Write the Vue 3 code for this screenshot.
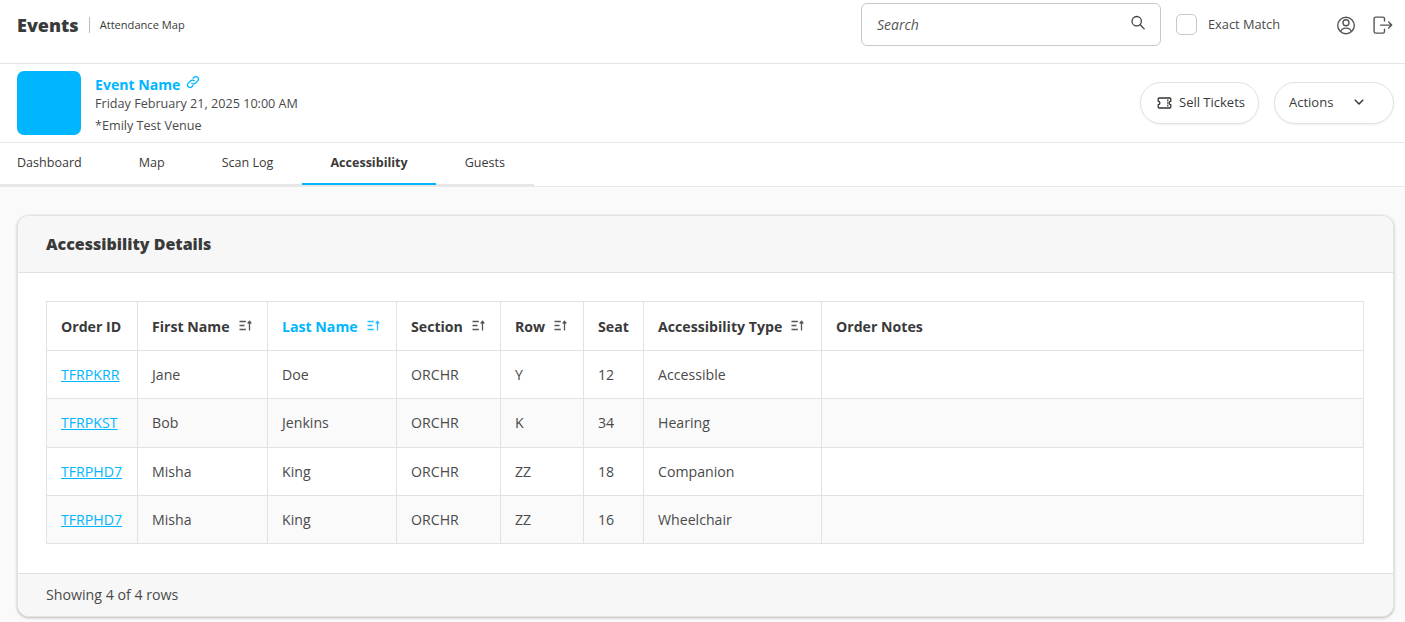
<script setup>
const tabs = [
  { label: 'Dashboard' },
  { label: 'Map' },
  { label: 'Scan Log' },
  { label: 'Accessibility', active: true },
  { label: 'Guests' }
]
const columns = [
  { label: 'Order ID', w: 91 },
  { label: 'First Name', w: 130, sort: true },
  { label: 'Last Name', w: 129, sort: true, active: true },
  { label: 'Section', w: 104, sort: true },
  { label: 'Row', w: 83, sort: true },
  { label: 'Seat', w: 60 },
  { label: 'Accessibility Type', w: 178, sort: true },
  { label: 'Order Notes', w: 542 }
]
const rows = [
  ['TFRPKRR', 'Jane', 'Doe', 'ORCHR', 'Y', '12', 'Accessible', ''],
  ['TFRPKST', 'Bob', 'Jenkins', 'ORCHR', 'K', '34', 'Hearing', ''],
  ['TFRPHD7', 'Misha', 'King', 'ORCHR', 'ZZ', '18', 'Companion', ''],
  ['TFRPHD7', 'Misha', 'King', 'ORCHR', 'ZZ', '16', 'Wheelchair', '']
]
</script>

<template>
  <div class="page">
    <header class="topbar">
      <div class="brand">
        <span class="brand-title">Events</span>
        <span class="brand-sub">Attendance Map</span>
      </div>
      <div class="top-tools">
        <div class="search">
          <span class="search-text">Search</span>
          <svg class="search-icon" width="16" height="16" viewBox="0 0 16 16" fill="none" stroke="#444" stroke-width="1.3">
            <circle cx="6.7" cy="6.2" r="4.7" />
            <path d="M10.2 9.7 14.2 13.9" stroke-linecap="round" />
          </svg>
        </div>
        <span class="check"></span>
        <span class="check-label">Exact Match</span>
        <svg class="user-icon" width="20" height="20" viewBox="0 0 20 20" fill="none" stroke="#555" stroke-width="1.4">
          <circle cx="10" cy="10.500" r="8.300" />
          <circle cx="10" cy="7.800" r="3" />
          <path d="M4.800 16.500c.6-2.400 2.600-3.400 5.200-3.400s4.600 1 5.200 3.400" />
        </svg>
        <svg class="logout-icon" width="20" height="20" viewBox="0 0 20 20" fill="none" stroke="#555" stroke-width="1.4" stroke-linecap="round" stroke-linejoin="round">
          <path d="M11.500 6V3.800a1.700 1.700 0 0 0-1.700-1.700H2.800a1.700 1.700 0 0 0-1.700 1.700v12.600a1.700 1.700 0 0 0 1.700 1.700h7a1.700 1.700 0 0 0 1.700-1.700v-2.200" />
          <path d="M7.500 10.100h11.200M15.700 7.100l3 3-3 3" />
        </svg>
      </div>
    </header>

    <section class="event">
      <div class="thumb"></div>
      <div class="event-info">
        <div class="event-name">
          <span>Event Name</span>
          <svg width="14" height="14" viewBox="0 0 14 14" fill="none" stroke="#00b6ff" stroke-width="1.300" stroke-linecap="round">
            <path d="M5.800 8.200a2.500 2.500 0 0 0 3.600 0l2.300-2.300a2.500 2.500 0 0 0-3.600-3.600l-.9.900" />
            <path d="M8.200 5.800a2.500 2.500 0 0 0-3.600 0L2.300 8.100a2.500 2.500 0 0 0 3.600 3.600l.9-.9" />
          </svg>
        </div>
        <div class="event-date">Friday February 21, 2025 10:00 AM</div>
        <div class="event-venue">*Emily Test Venue</div>
      </div>
      <div class="event-actions">
        <button class="pill sell">
          <svg class="ticket" width="15" height="12" viewBox="0 0 15 12" fill="none" stroke="#333" stroke-width="1.300">
            <path d="M2.200 1h10.600a1 1 0 0 1 1 1v2.300a1.700 1.700 0 0 0 0 3.400V10a1 1 0 0 1-1 1H2.200a1 1 0 0 1-1-1V7.700a1.700 1.700 0 0 0 0-3.400V2a1 1 0 0 1 1-1z" stroke-linejoin="round" />
            <path d="M10.800 2.600v1.600M10.800 5.200v1.600M10.800 7.800v1.600" />
          </svg>
          <span>Sell Tickets</span>
        </button>
        <button class="pill actions">
          <span>Actions</span>
          <svg width="12" height="8" viewBox="0 0 12 8" fill="none" stroke="#333" stroke-width="1.400">
            <path d="M1.800 1.800 6 6l4.200-4.200" />
          </svg>
        </button>
      </div>
    </section>

    <nav class="tabs">
      <a v-for="t in tabs" :key="t.label" class="tab" :class="{ on: t.active }">{{ t.label }}</a>
    </nav>

    <main class="content">
      <section class="card">
        <div class="card-head">Accessibility Details</div>
        <div class="card-body">
          <table class="grid">
            <colgroup>
              <col v-for="c in columns" :key="c.label" :style="{ width: c.w + 'px' }" />
            </colgroup>
            <thead>
              <tr>
                <th v-for="c in columns" :key="c.label" :class="{ hot: c.active }">
                  <span class="th-in">
                    {{ c.label }}
                    <svg v-if="c.sort" class="sort" width="14" height="12" viewBox="0 0 14 12" fill="none" stroke="currentColor" stroke-width="1.300">
                      <path d="M.5 1.500h6.300M.5 5.500h5M.5 9.500h6.300" />
                      <path d="M10.500 10.500V1.500M8.700 3.500l1.800-2.200 1.800 2.200" />
                    </svg>
                  </span>
                </th>
              </tr>
            </thead>
            <tbody>
              <tr v-for="(r, i) in rows" :key="i">
                <td v-for="(v, j) in r" :key="j">
                  <a v-if="j === 0" class="link">{{ v }}</a>
                  <template v-else>{{ v }}</template>
                </td>
              </tr>
            </tbody>
          </table>
        </div>
        <div class="card-foot">Showing 4 of 4 rows</div>
      </section>
    </main>
  </div>
</template>

<style>
html, body { margin: 0; background: #fafafa; }
</style>

<style scoped>
.page {
  width: 1405px;
  height: 622px;
  overflow: hidden;
  font-family: "Open Sans", sans-serif;
  color: #333;
  background: #fafafa;
}
.topbar {
  height: 63px;
  border-bottom: 1px solid #e4e4e4;
  background: #fff;
  display: flex;
  justify-content: space-between;
  padding: 0 12px 0 17px;
}
.brand { display: flex; align-items: center; height: 50px; }
.brand-title { font-size: 18px; font-weight: 800; color: #3a3a3a; line-height: 24px; }
.brand-sub {
  margin-left: 10px;
  padding-left: 10px;
  border-left: 1px solid #bbb;
  font-size: 11.100px;
  line-height: 16px;
  color: #3a3a3a;
}
.top-tools { display: flex; align-items: flex-start; }
.search {
  box-sizing: border-box;
  width: 300px;
  height: 43px;
  margin-top: 3px;
  border: 1px solid #c8c8c8;
  border-radius: 6px;
  display: flex;
  align-items: center;
  justify-content: space-between;
  padding: 0 14px 0 15px;
  background: #fff;
}
.search-text { font-size: 14px; font-style: italic; color: #555; }
.search-icon { margin-top: -3px; }
.check {
  box-sizing: border-box;
  width: 21px;
  height: 21px;
  margin: 14px 0 0 15px;
  border: 1px solid #c8c8c8;
  border-radius: 5px;
  background: #fff;
}
.check-label { margin: 15px 0 0 11px; font-size: 12.800px; line-height: 18px; color: #4a4a4a; width: 71px; white-space: nowrap; }
.user-icon { margin: 15px 0 0 57px; }
.logout-icon { margin: 15px 0 0 17px; }
.event {
  height: 78px;
  border-bottom: 1px solid #e9e9e9;
  background: #fff;
  display: flex;
  align-items: flex-start;
  padding-left: 17px;
}
.thumb {
  width: 64px;
  height: 64px;
  margin-top: 7px;
  border-radius: 7px;
  background: #00b6ff;
}
.event-info { margin-left: 14px; margin-top: 10px; }
.event-name {
  display: flex;
  align-items: flex-start;
  gap: 6px;
  font-size: 14.100px;
  font-weight: 700;
  line-height: 22px;
  color: #00b6ff;
}
.event-name svg { margin-top: 1px; }
.event-date { font-size: 12.620px; line-height: 16px; color: #4a4a4a; margin-top: 0; }
.event-venue { font-size: 12.620px; line-height: 16px; color: #4a4a4a; margin-top: 6px; }
.event-actions { margin-left: auto; display: flex; gap: 15px; padding: 18px 11px 0 0; }
.pill {
  height: 42px;
  border: 1px solid #e2e2e2;
  border-radius: 21px;
  background: #fff;
  box-shadow: 0 1px 2px rgba(0,0,0,.06);
  font-family: inherit;
  font-size: 13px;
  color: #3a3a3a;
  display: flex;
  align-items: center;
  padding: 0 0 2px;
}
.sell { width: 119px; padding-left: 16px; gap: 7px; }
.ticket { margin-top: 2px; }
.actions { width: 120px; padding: 0 28px 2px 14px; justify-content: space-between; }
.tabs {
  height: 43px;
  background: #fff;
  border-bottom: 1px solid #e9e9e9;
  display: flex;
}
.tab {
  position: relative;
  height: 41px;
  padding: 0 28.500px;
  border-bottom: 2px solid #e6e6e6;
  font-size: 12.550px;
  line-height: 39px;
  color: #3a3a3a;
}
.tab:first-child { padding-left: 17px; }
.tab.on { font-weight: 700; }
.tab.on::after {
  content: "";
  position: absolute;
  left: 0;
  right: 0;
  bottom: -1px;
  height: 2px;
  background: #00b6ff;
}
.content { padding: 28px 11px 0 17px; }
.card {
  height: 400px;
  border: 1px solid #e2e2e2;
  border-radius: 12px;
  background: #fff;
  box-shadow: 0 1px 3px rgba(0,0,0,.25);
  display: flex;
  flex-direction: column;
  overflow: hidden;
}
.card-head {
  height: 57px;
  flex: none;
  box-sizing: border-box;
  background: #f7f7f7;
  border-bottom: 1px solid #e2e2e2;
  padding-left: 28px;
  font-size: 16px;
  font-weight: 800;
  line-height: 56px;
  color: #3a3a3a;
}
.card-body { flex: 1; padding: 28px 29px 0 28px; }
.grid {
  width: 1317px;
  border-collapse: collapse;
  table-layout: fixed;
  font-size: 14.150px;
}
.grid th, .grid td {
  box-sizing: border-box;
  border: 1px solid #e2e2e2;
  padding: 0 14px;
  text-align: left;
  white-space: nowrap;
}
.grid th {
  height: 49px;
  font-weight: 700;
  color: #3a3a3a;
}
.grid th.hot { color: #00b6ff; }
.th-in { display: inline-flex; align-items: center; gap: 9px; }
.sort { margin-top: -1px; opacity: .85; }
.grid td { height: 48px; color: #4a4a4a; }
.grid tbody tr:nth-child(2) td { height: 49px; padding-bottom: 1px; }
.grid tbody tr:nth-child(even) { background: #fafafa; }
.link { color: #00b6ff; text-decoration: underline; }
.card-foot {
  height: 43px;
  flex: none;
  box-sizing: border-box;
  background: #f7f7f7;
  border-top: 1px solid #e2e2e2;
  padding-left: 28px;
  font-size: 14.200px;
  line-height: 42px;
  color: #4a4a4a;
}
</style>
